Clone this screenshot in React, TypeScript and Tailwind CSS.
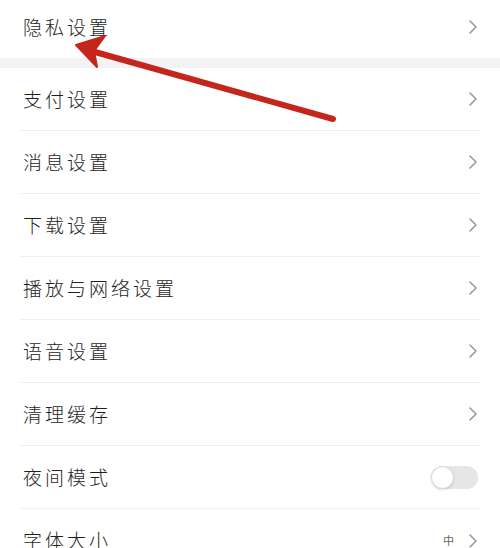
const items = [
  { label: '支付设置', type: 'link' },
  { label: '消息设置', type: 'link' },
  { label: '下载设置', type: 'link' },
  { label: '播放与网络设置', type: 'link' },
  { label: '语音设置', type: 'link' },
  { label: '清理缓存', type: 'link' },
  { label: '夜间模式', type: 'toggle' },
  { label: '字体大小', type: 'font' },
];

function Chevron() {
  return (
    <svg width="10" height="16" viewBox="0 0 10 16" fill="none">
      <path d="M2 2l6 6-6 6" stroke="#9a9a9a" strokeWidth="1.6" strokeLinecap="round" strokeLinejoin="round" />
    </svg>
  );
}

function Toggle() {
  return (
    <div className="w-[47px] h-[23px] rounded-full bg-[#e6e6e6] p-[1px] flex items-center">
      <div className="w-[23px] h-[23px] -ml-[1px] rounded-full bg-white border border-[#d9d9d9] shadow-sm" />
    </div>
  );
}

export default function App() {
  return (
    <div
      className="relative w-[500px] h-[548px] overflow-hidden bg-white text-[#1e1e1e]"
      style={{ fontFamily: '"Noto Sans CJK SC", "Noto Sans", sans-serif' }}
    >
      {/* first group */}
      <div className="h-[58px] mx-5 pl-[3px] pr-[2px] pb-[4px] flex items-center justify-between">
        <span className="text-[19px] tracking-[3px] font-light">隐私设置</span>
        <Chevron />
      </div>
      <div className="h-[10px] bg-[#f3f3f3]" />

      {/* settings list */}
      {items.map((item, idx) => (
        <div
          key={idx}
          className={`h-[63px] mx-5 pl-[3px] pr-[2px] flex items-center justify-between ${
            idx < items.length - 1 ? 'border-b border-[#f0f0f0]' : ''
          }`}
        >
          <span className="text-[19px] tracking-[3px] font-light">{item.label}</span>
          {item.type === 'link' && <Chevron />}
          {item.type === 'toggle' && <Toggle />}
          {item.type === 'font' && (
            <div className="flex items-center gap-[14px]">
              <span className="text-[11px] text-[#666]">中</span>
              <Chevron />
            </div>
          )}
        </div>
      ))}

      {/* red annotation arrow */}
      <svg className="absolute left-0 top-0 pointer-events-none" width="500" height="548" viewBox="0 0 500 548">
        <line x1="333" y1="119" x2="88" y2="50" stroke="#c4261c" strokeWidth="6" strokeLinecap="round" />
        <path d="M76 45 L105 36 L94 51 L97 67 Z" fill="#c4261c" stroke="#c4261c" strokeWidth="2" strokeLinejoin="round" />
      </svg>
    </div>
  );
}
